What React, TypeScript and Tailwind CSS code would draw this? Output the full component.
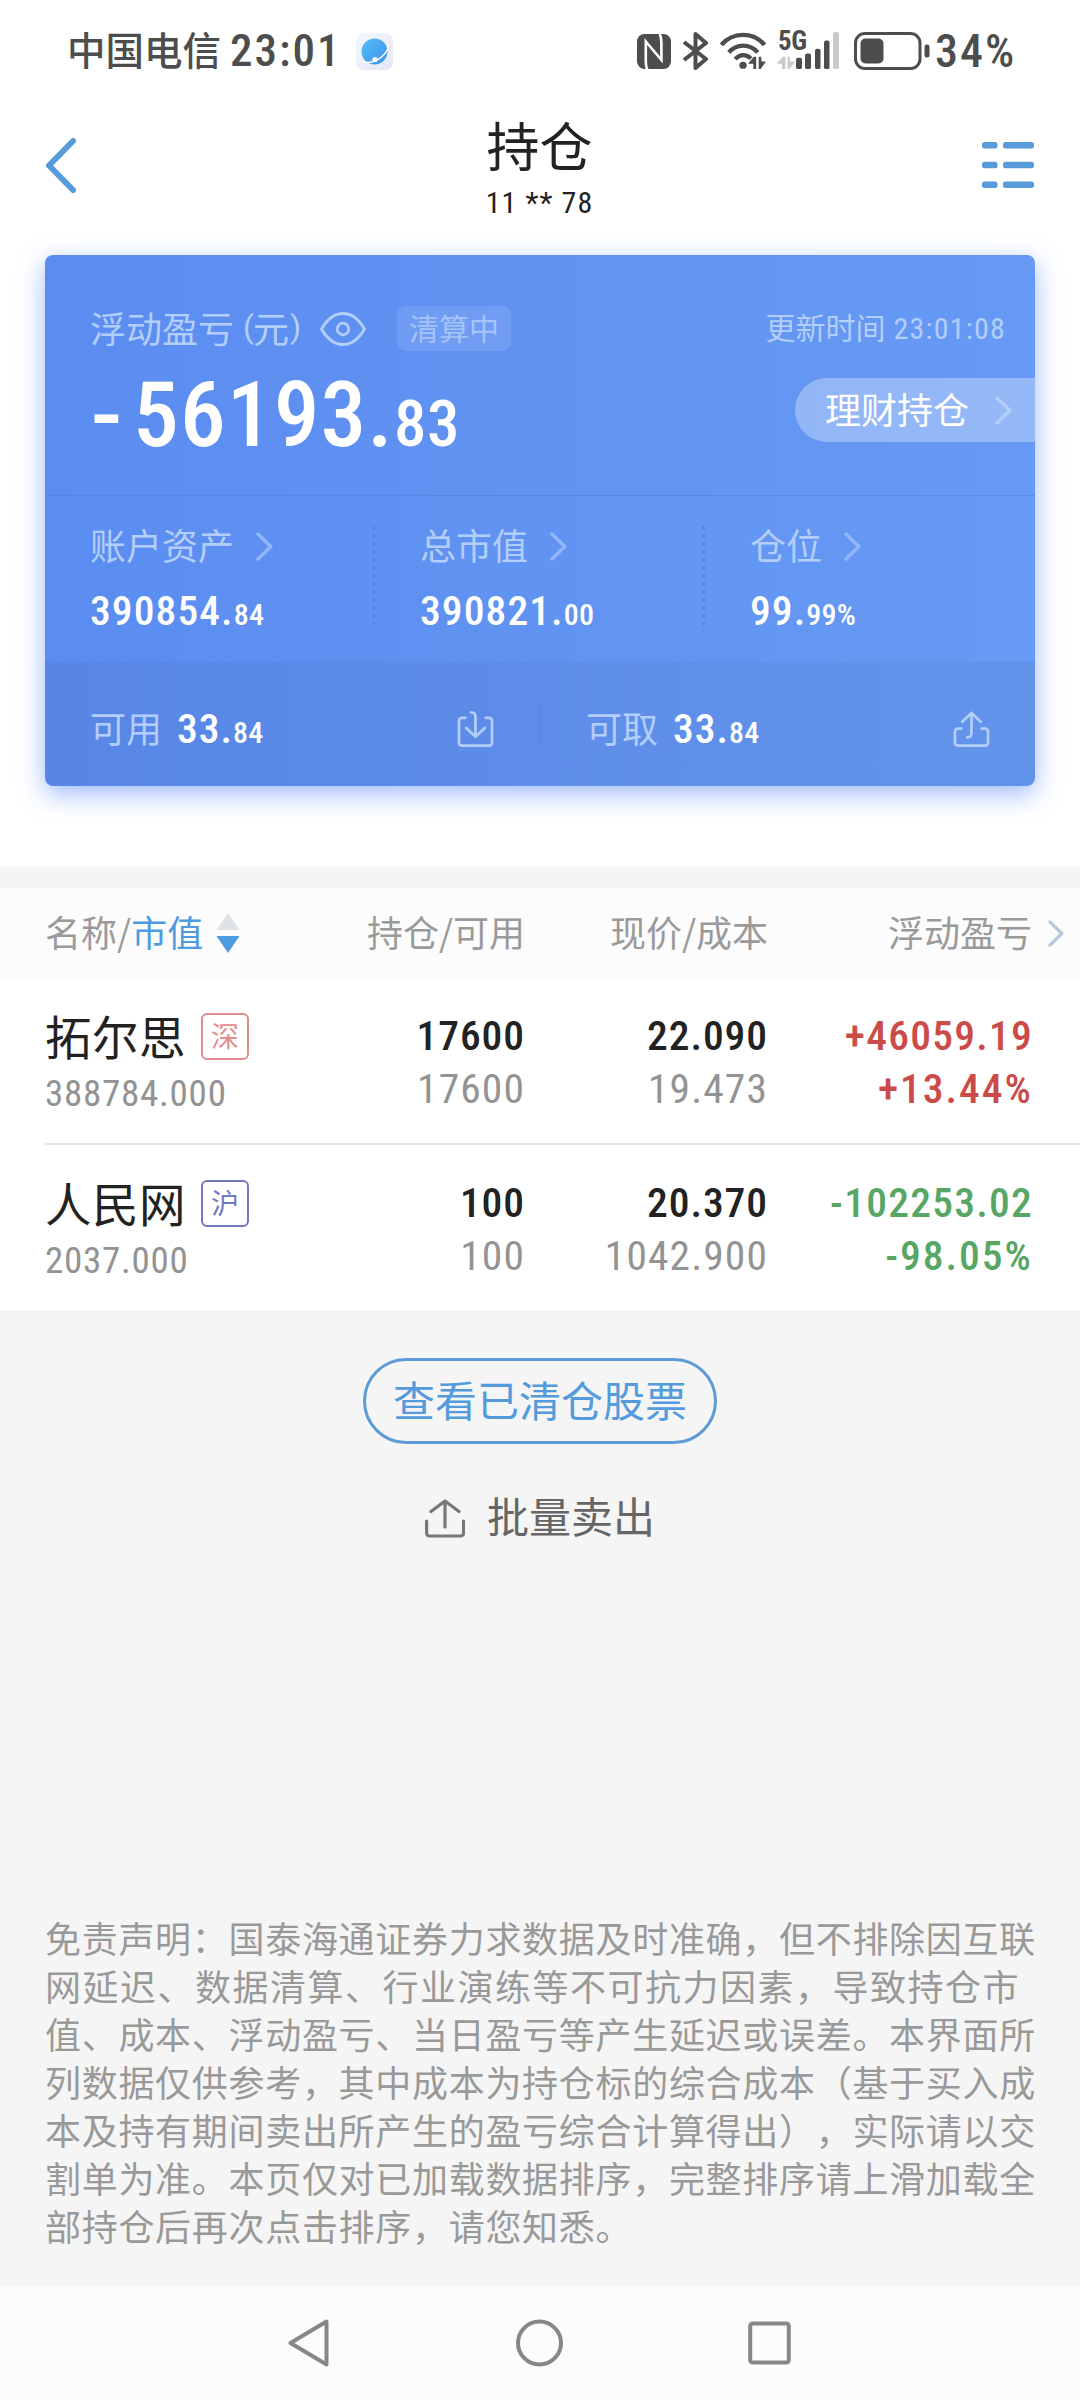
import type { ReactNode } from "react";

const holdings = [
  {
    name: "拓尔思",
    market: "深",
    badge: "border-[#dc8e90] text-[#e58c8e]",
    value: "388784.000",
    amount: "17600",
    available: "17600",
    price: "22.090",
    cost: "19.473",
    profit: "+46059.19",
    rate: "+13.44%",
    tone: "text-[#cb4b48]",
  },
  {
    name: "人民网",
    market: "沪",
    badge: "border-[#7377bd] text-[#7377c4]",
    value: "2037.000",
    amount: "100",
    available: "100",
    price: "20.370",
    cost: "1042.900",
    profit: "-102253.02",
    rate: "-98.05%",
    tone: "text-[#58a663]",
  },
];

const stats = [
  { label: "账户资产", whole: "390854.", rest: "84" },
  { label: "总市值", whole: "390821.", rest: "00" },
  { label: "仓位", whole: "99.", rest: "99%" },
];

const disclaimer = [
  { text: "免责声明：国泰海通证券力求数据及时准确，但不排除因互联", spacing: "tracking-[0.7px]" },
  { text: "网延迟、数据清算、行业演练等不可抗力因素，导致持仓市", spacing: "tracking-[1.5px]" },
  { text: "值、成本、浮动盈亏、当日盈亏等产生延迟或误差。本界面所", spacing: "tracking-[0.7px]" },
  { text: "列数据仅供参考，其中成本为持仓标的综合成本（基于买入成", spacing: "tracking-[0.7px]" },
  { text: "本及持有期间卖出所产生的盈亏综合计算得出），实际请以交", spacing: "tracking-[0.7px]" },
  { text: "割单为准。本页仅对已加载数据排序，完整排序请上滑加载全", spacing: "tracking-[0.7px]" },
  { text: "部持仓后再次点击排序，请您知悉。", spacing: "tracking-[0.7px]" },
];

function Num({ className = "", children }: { className?: string; children: ReactNode }) {
  return (
    <span className={`font-['Roboto_Condensed',Roboto,sans-serif] ${className}`}>
      {children}
    </span>
  );
}

function Chevron({ className = "" }: { className?: string }) {
  return (
    <svg viewBox="0 0 17 29" className={className} fill="none" stroke="currentColor" strokeWidth="3.5" strokeLinecap="round" strokeLinejoin="round">
      <path d="M2 2l12.8 12.5L2 27" />
    </svg>
  );
}

function StatusBar() {
  return (
    <div className="flex h-[102px] items-center pl-[67px] text-[#4d4d4d]">
      <span className="-mt-[6px] text-[38.5px] leading-[50px] font-medium">中国电信</span>
      <Num className="ml-[9px] w-[109px] text-[45px] leading-[50px] font-medium tracking-[2px]">23:01</Num>

      <svg viewBox="0 0 37 37" className="ml-[17px] h-[37px] w-[37px]">
        <defs>
          <linearGradient id="app" x1="0" y1="0" x2="1" y2="1">
            <stop offset="0" stopColor="#f3f8fd" />
            <stop offset="1" stopColor="#e4e6f5" />
          </linearGradient>
          <linearGradient id="globe" x1="0" y1="0" x2="1" y2="1">
            <stop offset="0" stopColor="#55bdf8" />
            <stop offset="1" stopColor="#3c93ea" />
          </linearGradient>
        </defs>
        <rect width="37" height="37" rx="8" fill="url(#app)" />
        <circle cx="18.5" cy="18.5" r="13" fill="url(#globe)" />
        <path d="M7 28.5c5 2 12.500.5 18-4 5-4.300 8.500-9.500 7-14" fill="none" stroke="#fff" strokeWidth="1.5" strokeLinecap="round" />
        <circle cx="19" cy="26.5" r="2.6" fill="#fff" />
      </svg>

      {/* NFC */}
      <svg viewBox="0 0 34 35" className="ml-[244px] h-[35px] w-[34px]">
        <rect width="34" height="35" rx="7.5" fill="currentColor" />
        <path d="M10.500 36C8.800 33 8.800 30 8.800 27V7.500l15.600 18.500V9c0-3 0-6-1.700-9" fill="none" stroke="#fff" strokeWidth="2.6" />
      </svg>

      {/* Bluetooth */}
      <svg viewBox="0 0 26 38" className="ml-[12px] h-[38px] w-[26px]" fill="none" stroke="currentColor" strokeWidth="4" strokeLinejoin="round">
        <path d="M1 10L23 27 12.500 36V2L23 11 1 28" />
      </svg>

      {/* Wi-Fi */}
      <svg viewBox="0 0 48 40" className="ml-[11px] h-[38px] w-[47px]" fill="none" stroke="currentColor" strokeWidth="4.4" preserveAspectRatio="none">
        <path d="M1.500 13.500C13-.5 34-.5 45.500 13.500" />
        <path d="M9 21.500c8-9.500 21.500-9.500 29.500 0" />
        <path d="M15.500 28.500c5-5.500 11.500-5.500 16-.5" />
        <circle cx="23.5" cy="35" r="3.8" fill="currentColor" stroke="none" />
        <path d="M29 33l5.500-7H37v13h-3v-5.500h-5zM39.500 26h2.500l.5 5H47l-5.500 8h-2z" fill="currentColor" stroke="none" />
      </svg>

      {/* 5G signal */}
      <div className="relative ml-[10px] h-[38px] w-[62px]">
        <Num className="absolute top-0 left-[1px] text-[27px] leading-[19px] font-bold tracking-[-0.5px]">5G</Num>
        <svg viewBox="0 0 62 40" className="h-[38px] w-[62px]" preserveAspectRatio="none">
          <g fill="#cacaca">
            <path d="M0 33l6-7h2.500v13h-3.500v-5.500H0zM10.500 26h2.500v5h5l-5.500 8h-2z" />
            <rect x="56" y="0" width="6" height="39" rx="2" />
          </g>
          <g fill="currentColor">
            <rect x="19" y="27" width="6" height="12" rx="2" />
            <rect x="28" y="22.5" width="6" height="16.5" rx="2" />
            <rect x="38" y="17.5" width="5.5" height="21.5" rx="2" />
            <rect x="47" y="9" width="5.5" height="30" rx="2" />
          </g>
        </svg>
      </div>

      {/* Battery */}
      <svg viewBox="0 0 76 38" className="ml-[15px] h-[38px] w-[76px]">
        <rect x="1.5" y="1.5" width="64.5" height="35" rx="9.5" fill="none" stroke="currentColor" strokeWidth="3" />
        <rect x="6.5" y="6.5" width="23" height="25" rx="5" fill="currentColor" />
        <rect x="70.5" y="12.5" width="5" height="13" rx="2.2" fill="currentColor" />
      </svg>
      <Num className="ml-[5px] text-[46px] leading-[50px] font-medium tracking-[2px]">34%</Num>
    </div>
  );
}

function Header() {
  return (
    <header className="flex h-[126px] items-center justify-between pr-[46px] pl-[45px]">
      <div className="w-[60px]">
        <svg viewBox="0 0 32 57" className="h-[57px] w-[32px]" fill="none" stroke="#589bdb" strokeWidth="6" strokeLinecap="round" strokeLinejoin="round">
          <path d="M28 4L4 28.500l24 24.500" />
        </svg>
      </div>
      <div className="flex flex-col items-center pt-[7px] text-[#222]">
        <h1 className="text-[53px] leading-[60px]">持仓</h1>
        <Num className="mt-[9px] text-[30px] leading-[40px] tracking-[1.1px]">11 ** 78</Num>
      </div>
      <div className="flex w-[60px] justify-end">
        <svg viewBox="0 0 52 46" className="h-[46px] w-[52px]" fill="#589bdb">
          <rect x="0" y="0" width="15.5" height="6.5" rx="2.5" />
          <rect x="21" y="0" width="31" height="6.5" rx="2.5" />
          <rect x="0" y="19.7" width="15.5" height="6.5" rx="2.5" />
          <rect x="21" y="19.7" width="31" height="6.5" rx="2.5" />
          <rect x="0" y="39.4" width="15.5" height="6.5" rx="2.5" />
          <rect x="21" y="39.4" width="31" height="6.5" rx="2.5" />
        </svg>
      </div>
    </header>
  );
}

function AssetCard() {
  return (
    <section className="mx-[45px] mt-[27px] h-[531px] overflow-hidden rounded-[8px] bg-linear-to-r from-[#5b8cf0] to-[#679af4] text-[#b3cefb] shadow-[0_8px_26px_rgba(80,130,245,0.55)]">
      <div className="h-[241px] border-b border-[#4f80de]/60 pt-[51px]">
        <div className="flex h-[45px] items-center pl-[45px]">
          <span className="-mt-[4px] text-[36px] leading-[46px]">浮动盈亏</span>
          <span className="-mt-[4px] ml-[9px] flex text-[36px] leading-[46px]">
            <span className="w-[10px] font-[Roboto] text-[32px]">(</span>
            元
            <span className="w-[12px] text-right font-[Roboto] text-[32px]">)</span>
          </span>
          <svg viewBox="0 0 46 34" className="ml-[19px] h-[34px] w-[46px]" fill="none" stroke="currentColor" strokeWidth="2.8">
            <path d="M1.500 17C7 7.500 14 1.500 23 1.500S39 7.500 44.500 17C39 26.500 32 32.500 23 32.500S7 26.500 1.500 17z" strokeLinejoin="round" />
            <circle cx="23" cy="17" r="5.8" />
          </svg>
          <span className="ml-[31px] h-[45px] rounded-[9px] bg-white/10 px-[12px] text-[30px] leading-[42px] text-[#a5c3fa]">
            清算中
          </span>
          <span className="mr-[29px] ml-auto flex text-[30px]">
            <span className="-mt-[2px] leading-[45px]">更新时间</span>
            <Num className="ml-[8px] leading-[45px] tracking-[1.2px]">23:01:08</Num>
          </span>
        </div>

        <div className="mt-[27px] flex h-[64px] items-center justify-between pl-[46px]">
          <Num className="pt-[19px] text-[91.5px] leading-[64px] font-medium tracking-[0.012em] text-white">
            <span className="font-[Roboto] tracking-[11px]">-</span>56193.
            <span className="text-[65px] tracking-[0.5px]">83</span>
          </Num>
          <div className="flex h-[64px] w-[240px] items-center rounded-l-full bg-white/30 pl-[30px] text-[36px] text-white">
            <span className="-mt-[4px]">理财持仓</span>
            <Chevron className="ml-[26px] h-[29px] w-[17px] text-[#b3cefb]" />
          </div>
        </div>
      </div>

      <div className="flex h-[165px]">
        {stats.map((item, i) => (
          <div key={item.label} className="flex w-[331px] pt-[30px] pl-[45px]">
            <div className="flex-1">
              <div className="flex h-[40px] items-center text-[36px]">
                <span className="-mt-[4px]">{item.label}</span>
                <Chevron className="ml-[22px] h-[29px] w-[17px] text-[#91b6fa]" />
              </div>
              <Num className="mt-[25px] block text-[41.5px] leading-[40px] font-medium tracking-[1.1px] text-white">
                {item.whole}
                <span className="text-[30px] tracking-[0.2px]">{item.rest}</span>
              </Num>
            </div>
            {i < 2 && (
              <div className="h-[105px] w-[3px] bg-[repeating-linear-gradient(to_bottom,#5686e2_0_3px,transparent_3px_8px)]" />
            )}
          </div>
        ))}
      </div>

      <div className="flex h-[125px] items-center bg-black/4 pt-[11px]">
        <div className="flex w-[494px] items-center pr-[45px] pl-[45px] text-[36px] leading-[50px]">
          <span className="-mt-[4px]">可用</span>
          <Num className="mt-[3px] ml-[15px] text-[41.5px] font-medium tracking-[1px] text-white">
            33.<span className="text-[30px] tracking-[0.2px]">84</span>
          </Num>
          <svg viewBox="0 0 37 37" className="ml-auto h-[36px] w-[37px]" fill="none" stroke="currentColor" strokeWidth="2.8" strokeLinecap="round" strokeLinejoin="round">
            <path d="M8 7H4.500a3 3 0 0 0-3 3v22.500a3 3 0 0 0 3 3h28a3 3 0 0 0 3-3V10a3 3 0 0 0-3-3H29" />
            <path d="M14 1.500c3.500 0 4.500 1.500 4.500 5V26M9 17.500l9.500 9 9.500-9" />
          </svg>
        </div>
        <div className="mb-[11px] h-[42px] w-px bg-[#5281df]" />
        <div className="flex flex-1 items-center pr-[45px] pl-[46px] text-[36px] leading-[50px]">
          <span className="-mt-[4px]">可取</span>
          <Num className="mt-[3px] ml-[15px] text-[41.5px] font-medium tracking-[1px] text-white">
            33.<span className="text-[30px] tracking-[0.2px]">84</span>
          </Num>
          <svg viewBox="0 0 37 37" className="ml-auto h-[36px] w-[37px]" fill="none" stroke="currentColor" strokeWidth="2.8" strokeLinecap="round" strokeLinejoin="round">
            <path d="M8 18H4.500a3 3 0 0 0-3 3v11.500a3 3 0 0 0 3 3h28a3 3 0 0 0 3-3V21a3 3 0 0 0-3-3H29" />
            <path d="M14 27c3.500 0 4.500-1.500 4.500-5V2M9 11l9.500-9L28 11" />
          </svg>
        </div>
      </div>
    </section>
  );
}

function Holdings() {
  return (
    <section>
      <div className="grid h-[90px] grid-cols-[325px_200px_243px_264px_48px] items-center bg-[#fcfcfc] text-right text-[36px] leading-[50px] text-[#9a9a9a]">
        <div className="flex items-center pl-[45px]">
          <span className="-mt-[4px]">
            名称/<span className="text-[#4f9bdf]">市值</span>
          </span>
          <svg viewBox="0 0 24 40" className="ml-[13px] h-[40px] w-[24px]">
            <path d="M12 0l11.500 17H.5z" fill="#dfe3e5" />
            <path d="M12 40L.5 23h23z" fill="#4f9bdf" />
          </svg>
        </div>
        <div className="-mt-[4px]">持仓/可用</div>
        <div className="-mt-[4px]">现价/成本</div>
        <div className="-mt-[4px]">浮动盈亏</div>
        <Chevron className="ml-[16px] h-[27px] w-[16px] text-[#b7c8dc]" />
      </div>

      {holdings.map((item, i) => (
        <div key={item.name} className={`pl-[45px] ${i > 0 ? "h-[165px]" : "h-[167px]"}`}>
          <div
            className={`grid h-full grid-cols-[280px_200px_243px_265px] text-right ${
              i > 0 ? "" : "border-b-2 border-[#e5e5e5]"
            }`}
          >
            <div className="pt-[35px] text-left">
              <div className="flex h-[47px] items-center text-[46.5px] leading-[47px] text-[#222]">
                <span className="-mt-[5px] tracking-[0.5px]">{item.name}</span>
                <span className={`ml-[15px] flex h-[47px] w-[48px] items-center justify-center rounded-[6px] border-2 pb-[3px] text-[28px] ${item.badge}`}>
                  {item.market}
                </span>
              </div>
              <Num className="mt-[14px] block text-[37px] leading-[40px] tracking-[0.75px] text-[#939393]">{item.value}</Num>
            </div>
            {[
              { top: item.amount, bottom: item.available },
              { top: item.price, bottom: item.cost },
            ].map((cell, n) => (
              <Num key={n} className="pt-[31px] text-[41.5px] leading-[53px] tracking-[0.95px]">
                <div className="font-medium text-[#222]">{cell.top}</div>
                <div className="tracking-[1.1px] text-[#939393]">{cell.bottom}</div>
              </Num>
            ))}
            <Num className={`pt-[31px] text-[41.5px] leading-[53px] font-medium tracking-[1.25px] ${item.tone}`}>
              <div>{item.profit}</div>
              <div className="tracking-[2px]">{item.rate}</div>
            </Num>
          </div>
        </div>
      ))}
    </section>
  );
}

function NavBar() {
  return (
    <nav className="flex h-[114px] items-center justify-between bg-[#fcfcfc] pr-[289px] pl-[288px]">
      <svg viewBox="0 0 42 48" className="h-[48px] w-[42px]" fill="none" stroke="#878787" strokeWidth="4" strokeLinejoin="round">
        <path d="M38.500 2.500v43L2.500 24z" />
      </svg>
      <svg viewBox="0 0 48 48" className="h-[48px] w-[48px]" fill="none" stroke="#878787" strokeWidth="4">
        <circle cx="24.5" cy="24" r="21.5" />
      </svg>
      <svg viewBox="0 0 43 44" className="h-[44px] w-[43px]" fill="none" stroke="#878787" strokeWidth="4">
        <rect x="2.2" y="2.5" width="38.6" height="39" rx="2.5" />
      </svg>
    </nav>
  );
}

export default function App() {
  return (
    <div className="flex h-[2400px] w-[1080px] flex-col overflow-hidden bg-white font-['Noto_Sans_CJK_SC',sans-serif]">
      <StatusBar />
      <Header />
      <AssetCard />

      <div className="mt-[81px] h-[21px] bg-[#f5f5f5]" />
      <Holdings />

      <main className="flex flex-1 flex-col items-center bg-[#f5f5f5] pt-[48px]">
        <button className="h-[86px] w-[354px] rounded-full border-[3px] border-[#5d9bd6] pb-[5px] text-[42px] leading-[70px] text-[#539bdc]">
          查看已清仓股票
        </button>

        <button className="mt-[51px] flex h-[46px] items-center text-[42px] leading-[46px] text-[#666]">
          <svg viewBox="0 0 40 39" className="mr-[22px] h-[39px] w-[40px]" fill="none" stroke="#777" strokeWidth="3.2" strokeLinecap="round" strokeLinejoin="round">
            <path d="M1.600 22v12a3 3 0 0 0 3 3h31a3 3 0 0 0 3-3V22" />
            <path d="M20 28V2M6 12.500L20 2l14 10.500" />
          </svg>
          <span className="-mt-[6px]">批量卖出</span>
        </button>

        <div className="mt-[372px] w-[990px] text-[36px] leading-[48px] whitespace-nowrap text-[#999] [text-spacing-trim:space-all]">
          {disclaimer.map((line) => (
            <p key={line.text} className={line.spacing}>
              {line.text}
            </p>
          ))}
        </div>
      </main>

      <NavBar />
    </div>
  );
}
